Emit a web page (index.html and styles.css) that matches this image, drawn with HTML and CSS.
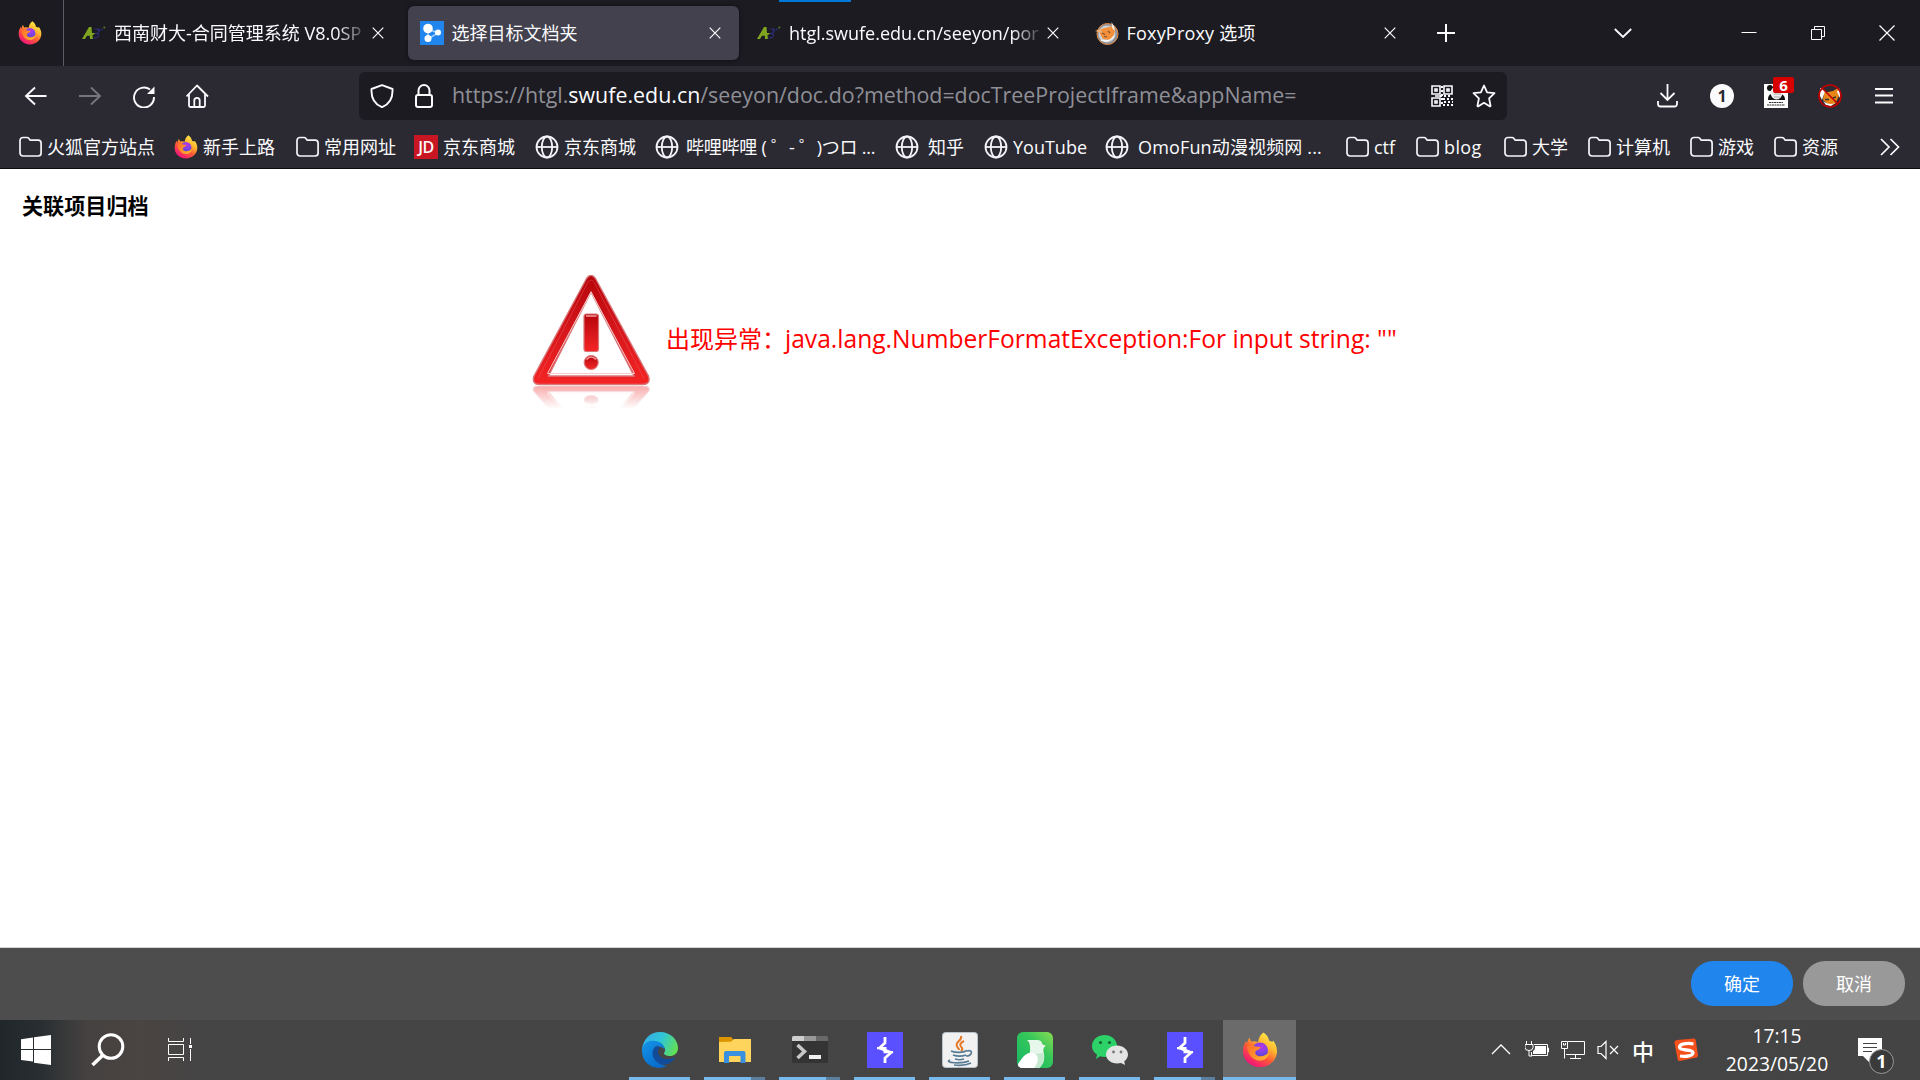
FILE: index.html
```html
<!DOCTYPE html>
<html lang="zh-CN">
<head>
<meta charset="utf-8">
<title>选择目标文档夹</title>
<link rel="stylesheet" href="styles.css">
</head>
<body>
<svg class="defs" aria-hidden="true">
  <defs>
    <linearGradient id="fx-body" x1="0.85" y1="0.05" x2="0.25" y2="0.95">
      <stop offset="0" stop-color="#fff44f"/><stop offset="0.35" stop-color="#ffb52e"/><stop offset="0.62" stop-color="#ff5a36"/><stop offset="1" stop-color="#f0147a"/>
    </linearGradient>
    <radialGradient id="fx-core" cx="0.6" cy="0.25" r="0.8">
      <stop offset="0" stop-color="#b833e1"/><stop offset="0.5" stop-color="#7a45e8"/><stop offset="1" stop-color="#4a3fae"/>
    </radialGradient>
    <linearGradient id="fx-arm" x1="0" y1="0" x2="1" y2="0.6">
      <stop offset="0" stop-color="#ff6a2b"/><stop offset="1" stop-color="#ffb02e"/>
    </linearGradient>
    <symbol id="firefox" viewBox="0 0 36 36">
      <path d="M21.500 0.500C24 2 26.500 5 27 8.500C29 9.300 30.500 11 31.200 8.500C34 12.500 35.200 16 35 20C34.500 28.500 27 35.200 18 35.200C9 35.200 1 28.500 1 19.500C1 15 2.200 11.500 4.200 8.800L4.800 11.500L7.200 5.500L9.300 9.800C11.500 9 14 9.200 16 10.200C16.500 6 18.500 2.500 21.500 .5Z" fill="url(#fx-body)"/>
      <circle cx="18" cy="18.500" r="8" fill="url(#fx-core)"/>
      <path d="M4.800 14C8 11.800 11 13 13.500 14.400L18.600 15C18 17.500 15.500 17.600 13.800 19C12.500 20.500 13.500 23.500 17 24.200C21 25 24.500 22.500 27.500 20.500C26 26 22 29 17 28.600C11 28 6 23 4.800 14Z" fill="url(#fx-arm)"/>
    </symbol>
    <symbol id="folder" viewBox="0 0 24 24">
      <path d="M2 5.500a3 3 0 0 1 3-3h4.100c.7 0 1.200.3 1.600.8l1.500 1.900h7.900a3 3 0 0 1 3 3V18a3 3 0 0 1-3 3H5a3 3 0 0 1-3-3z" fill="none" stroke="#f4f4f8" stroke-width="1.700"/>
    </symbol>
    <symbol id="globe" viewBox="0 0 24 24">
      <g fill="none" stroke="#f4f4f8" stroke-width="1.800"><circle cx="12" cy="12" r="10.500"/><ellipse cx="12" cy="12" rx="5.200" ry="10.500"/><path d="M1.500 12h21"/></g>
    </symbol>
    <symbol id="cross" viewBox="0 0 12 12"><path d="M.7.700l10.600 10.600M11.300.7L.7 11.300" stroke="#fbfbfe" stroke-width="1.200" fill="none"/></symbol>
    <symbol id="aplus" viewBox="0 0 24 24">
      <path d="M0 18L7 6l2.500 0L10 12h4l-3.500 2.200.5 3.800H8l-.2-3.200H5L3 18z" fill="#80a51f"/>
      <path d="M11 7.500h5.500c3 0 2 4-.5 4.500 2.500.8 1.200 5.500-2.500 5.500H10l3-1.500h1.500c2 0 2-2.500 0-2.700h-2l.4-1.600h2c1.800-.3 2-2.700 0-2.700z" fill="#292c70"/><circle cx="20" cy="8.500" r="1" fill="#292c70"/><circle cx="22.300" cy="6.500" r="1" fill="#557c27"/>
    </symbol>
    <symbol id="burp" viewBox="0 0 36 36">
      <path d="M0 0h36v36H0z" fill="#5b50ff"/>
      <path d="M18 5v6l-5.500 5 11.500 4.500-6 5.500v5" fill="none" stroke="#fff" stroke-width="2.800"/>
      <path d="M10 16.200h9.500M16.500 20.200h9.500" stroke="#fff" stroke-width="2.200"/>
    </symbol>
  </defs>
</svg>

<header class="browser">
  <div class="top-progress"></div>
  <div class="tabstrip">
    <div class="pinned"><svg class="i24"><use href="#firefox"/></svg></div>
    <div class="tab">
      <svg class="i24"><use href="#aplus"/></svg><span class="tab-label fade">西南财大-合同管理系统 V8.0SP</span><svg class="x12"><use href="#cross"/></svg>
    </div>
    <div class="tab active">
      <svg class="i24" viewBox="0 0 24 24"><path d="M0 0h24v24H0z" fill="#2085ed"/><path d="M8 7v11M8 8l10 4-10 6" stroke="#a5d0fa" stroke-width="1.500" fill="none"/><circle cx="8" cy="7.500" r="4.800" fill="#fff"/><circle cx="8" cy="17.500" r="3.500" fill="#fff"/><circle cx="18" cy="11.500" r="3" fill="#fff"/></svg><span class="tab-label">选择目标文档夹</span><svg class="x12"><use href="#cross"/></svg>
    </div>
    <div class="tab">
      <svg class="i24"><use href="#aplus"/></svg><span class="tab-label fade">htgl.swufe.edu.cn/seeyon/por</span><svg class="x12"><use href="#cross"/></svg>
    </div>
    <div class="tab">
      <svg class="i24" viewBox="0 0 24 24"><circle cx="12.500" cy="13" r="10.500" fill="#8c9199" stroke="#e7893c" stroke-width="1"/><circle cx="12" cy="13" r="8.500" fill="#ced1d5"/><path d="M4 9l4-1.500 8-2L19 5l1 5-2 6-4 3-6-1-3-5z" fill="#f4903a"/><path d="M0 10l6-2 1 4z" fill="#f1b27c"/><path d="M16.500 1l2.500 4 1 5-3-3z" fill="#fff" opacity=".8"/><path d="M7 12l3 1.500M13 10l2 2M9 15.500l3 .5" stroke="#7b5137" stroke-width="1.200"/><path d="M6 19c4 2 10 1 13-4" stroke="#fff" stroke-width="1.300" fill="none"/></svg><span class="tab-label foxy">FoxyProxy 选项</span><svg class="x12"><use href="#cross"/></svg>
    </div>
    <svg class="plus" viewBox="0 0 18 18"><path d="M9 0v18M0 9h18" stroke="#fbfbfe" stroke-width="2"/></svg>
    <svg class="chev" viewBox="0 0 18 10"><path d="M.8 1L9 9l8.200-8" fill="none" stroke="#fbfbfe" stroke-width="1.800"/></svg>
    <div class="window-buttons">
      <svg viewBox="0 0 16 16"><path d="M.5 7.500h15" stroke="#fff"/></svg>
      <svg viewBox="0 0 16 16"><path d="M1.500 4.500h10v10h-10zM4.500 4.500v-3h10v10h-3" fill="none" stroke="#fff"/></svg>
      <svg viewBox="0 0 16 16"><path d="M.5.500l15 15M15.500.5l-15 15" stroke="#fff" stroke-width="1.200"/></svg>
    </div>
  </div>

  <nav class="navbar">
    <div class="nav-buttons">
      <svg viewBox="0 0 24 24"><path d="M22.500 12H2M11 3.500L2 12l9 8.500" fill="none" stroke="#fbfbfe" stroke-width="1.900"/></svg>
      <svg viewBox="0 0 24 24"><path d="M1 12h21M13 3.500l9 8.500-9 8.500" fill="none" stroke="#76757d" stroke-width="1.900"/></svg>
      <svg viewBox="0 0 24 24"><path d="M18 5.500A10 10 0 1 0 22 13" fill="none" stroke="#fbfbfe" stroke-width="1.900"/><path d="M22.500 2.500v7.500H15z" fill="#fbfbfe"/></svg>
      <svg viewBox="0 0 24 24"><path d="M.5 12.500L11 1.500l11 11M3 10v11.500a1.500 1.500 0 0 0 1.500 1.500h13a1.500 1.500 0 0 0 1.500-1.500V10M8.300 22.500v-6a2.700 2.700 0 0 1 5.400 0v6" fill="none" stroke="#fbfbfe" stroke-width="1.800" stroke-linejoin="round"/></svg>
    </div>
    <div class="urlbar">
      <svg class="i24" viewBox="0 0 24 24"><path d="M12 1.200L22.500 5C23 14 20 20 12 23.200 4 20 1 14 1.500 5z" fill="none" stroke="#fbfbfe" stroke-width="1.900" stroke-linejoin="round"/></svg>
      <svg class="i24 lock" viewBox="0 0 24 24"><path d="M6.500 11V6.500a5.500 5.500 0 0 1 11 0V11" fill="none" stroke="#fbfbfe" stroke-width="2"/><rect x="4" y="11" width="16" height="12" rx="2" fill="none" stroke="#fbfbfe" stroke-width="2"/></svg>
      <span class="url">https://htgl.<b>swufe.edu.cn</b>/seeyon/doc.do?method=docTreeProjectIframe&amp;appName=</span>
      <svg class="i24" viewBox="0 0 24 24" fill="none" stroke="#fbfbfe" stroke-width="1.600"><path d="M2 2h8v8H2zM14 2h8v8h-8zM2 14h8v8H2z"/><path d="M5 5h2v2H5zM17 5h2v2h-2zM5 17h2v2H5z"/><path d="M12 2v20M10 12h12" stroke-dasharray="2 2" stroke-width="2"/><path d="M13 15h10M14 18h9M13 21h10" stroke-dasharray="2 2" stroke-width="2"/><path d="M5 12h5"/></svg>
      <svg class="i24" viewBox="0 0 24 24"><path d="M12 1.500l3.100 6.800 7.400.9-5.400 5.100 1.400 7.300a.6.600 0 0 1-.9.700L12 18.800l-5.600 3.500a.6.600 0 0 1-.9-.7l1.400-7.300L1.500 9.200l7.400-.9z" fill="none" stroke="#fbfbfe" stroke-width="1.800" stroke-linejoin="round"/></svg>
    </div>
    <div class="ext-buttons">
      <svg viewBox="0 0 24 24"><path d="M11.500 0v15.500M4.500 9l7 7 7-7M2 17v3a2.500 2.500 0 0 0 2.500 2.500h14A2.500 2.500 0 0 0 21 20v-3" fill="none" stroke="#fbfbfe" stroke-width="1.800"/></svg>
      <span class="count">1</span>
      <span class="panda"><svg viewBox="0 0 24 24"><path d="M0 0h24v24H0z" fill="#fff"/><circle cx="6" cy="4" r="3" fill="#111"/><path d="M4 16c0-5 2-6 4-6h8c2 0 5 1 5 6z" fill="#111"/><ellipse cx="12.500" cy="9" rx="6" ry="6.500" fill="#eee"/><path d="M10 10h7M10 13h6" stroke="#999" stroke-width=".8"/><path d="M5 18.500h14M3 21h18" stroke="#333" stroke-width="1" stroke-dasharray="2 .5"/></svg><em>6</em></span>
      <svg viewBox="0 0 24 24"><path d="M6 8h4l5-1 5-3 1 8-4 8-6 1-6-5z" fill="#e88517"/><path d="M2 4l5 3-3 9-2-4zM21 4l-2 4 3 6 0-6zM5 17c4 3 8 4 12 2l-4 3-5-1z" fill="#fff"/><path d="M7 15.500h4M15 14l3-1" stroke="#333" stroke-width="1.500"/><circle cx="12" cy="12" r="11" fill="none" stroke="#c00000" stroke-width="1.600"/><path d="M4 4l16 16" stroke="#c00000" stroke-width="1.600"/></svg>
      <svg viewBox="0 0 24 24"><path d="M3 5h18M3 11.500h18M3 18.500h18" stroke="#fbfbfe" stroke-width="1.800"/></svg>
    </div>
  </nav>

  <div class="bookmarks">
    <a><svg class="i24"><use href="#folder"/></svg>火狐官方站点</a>
    <a><svg class="i24"><use href="#firefox"/></svg>新手上路</a>
    <a><svg class="i24"><use href="#folder"/></svg>常用网址</a>
    <a><span class="jd">JD</span>京东商城</a>
    <a><svg class="i24"><use href="#globe"/></svg>京东商城</a>
    <a class="wide"><svg class="i24"><use href="#globe"/></svg><span class="bili">哔哩哔哩 ( ゜- ゜)つロ ...</span></a>
    <a class="wide"><svg class="i24"><use href="#globe"/></svg>知乎</a>
    <a><svg class="i24"><use href="#globe"/></svg>YouTube</a>
    <a class="wide omo"><svg class="i24"><use href="#globe"/></svg>OmoFun动漫视频网 ...</a>
    <a><svg class="i24"><use href="#folder"/></svg>ctf</a>
    <a class="blog"><svg class="i24"><use href="#folder"/></svg>blog</a>
    <a><svg class="i24"><use href="#folder"/></svg>大学</a>
    <a><svg class="i24"><use href="#folder"/></svg>计算机</a>
    <a><svg class="i24"><use href="#folder"/></svg>游戏</a>
    <a><svg class="i24"><use href="#folder"/></svg>资源</a>
    <svg class="more" viewBox="0 0 20 18"><path d="M1 1l8 8-8 8M10.500 1l8 8-8 8" fill="none" stroke="#fbfbfe" stroke-width="1.700"/></svg>
  </div>
</header>

<main class="page">
  <h1>关联项目归档</h1>
  <div class="error">
    <svg class="warning" viewBox="0 0 120 140">
      <defs>
        <linearGradient id="red" x1="0" y1="0" x2="0" y2="1"><stop offset="0" stop-color="#b50409"/><stop offset="0.500" stop-color="#d5161b"/><stop offset="1" stop-color="#f52424"/></linearGradient>
        <linearGradient id="veil" x1="0" y1="0" x2="0" y2="1"><stop offset="0" stop-color="#fff" stop-opacity=".6"/><stop offset="0.800" stop-color="#fff"/></linearGradient>
        <clipPath id="below"><path d="M0 111h120v29H0z"/></clipPath>
      </defs>
      <g id="sign">
        <path d="M55.500 3.500Q60 -3 64.500 3.500L117.500 101Q120 109 112 109.500H8Q.5 109 3 101ZM60 17L17.500 101H103Z" fill="url(#red)" fill-rule="evenodd" stroke="#d8777a" stroke-width="1.400"/>
        <path d="M60 17L16.500 98.500H103.500Z" fill="none" stroke="#f7cccc" stroke-width="1"/>
        <path d="M7 103.500L57 7Q60 3 63 7L113 103.500" fill="none" stroke="#ef6668" stroke-width="1" opacity=".4"/>
        <rect x="53" y="39" width="14.500" height="37.500" rx="2.500" fill="url(#red)" stroke="#d8777a" stroke-width="1.200"/>
        <path d="M55 41h10.500" stroke="#f2a0a0" stroke-width="1.500"/>
        <circle cx="60.200" cy="87.500" r="7" fill="url(#red)" stroke="#d8777a" stroke-width="1.200"/>
        <path d="M55.500 84.500q4.700-5 9.400 0" stroke="#f49a9a" fill="none" stroke-width="1.500"/>
      </g>
      <g clip-path="url(#below)"><use href="#sign" transform="translate(0 180) scale(1 -.63)"/><path d="M0 110h120v30H0z" fill="url(#veil)"/></g>
    </svg>
    <p>出现异常：<span>java.lang.NumberFormatException:For input string: ""</span></p>
  </div>
</main>

<footer class="actions">
  <button class="ok">确定</button>
  <button class="cancel">取消</button>
</footer>

<div class="taskbar">
  <div class="start">
    <svg class="win" viewBox="0 0 30 30"><path d="M0 4.200L12 2.500V14H0zM13 2.300L30 0v14H13zM0 15h12v11.500L0 25zM13 15h17v15l-17-2.300z" fill="#fff"/></svg>
    <svg class="find" viewBox="0 0 34 34"><circle cx="20" cy="13.500" r="11.800" fill="none" stroke="#fff" stroke-width="3"/><path d="M11.500 22.500L1.500 32" stroke="#fff" stroke-width="3.600"/></svg>
    <svg class="view" viewBox="0 0 24 24"><path d="M.5 0v3.500h15V0M.5 6.500h15v10H.5zM.5 23v-3.500h15V23M22.500 0v6M22.500 11v12" fill="none" stroke="#fff"/><path d="M21 7h3v3h-3z" fill="#fff"/></svg>
  </div>
  <div class="apps">
    <div class="app"><svg viewBox="0 0 36 36"><defs><linearGradient id="edge-a" x1="0" y1="0.300" x2="1" y2="0.600"><stop offset="0" stop-color="#35aee8"/><stop offset="0.500" stop-color="#30c5d5"/><stop offset="1" stop-color="#64e052"/></linearGradient><linearGradient id="edge-b" x1="0" y1="0" x2="0.700" y2="1"><stop offset="0" stop-color="#1495e8"/><stop offset="1" stop-color="#0869c9"/></linearGradient></defs><path d="M0 18C1 7 8 0 18 0c11 0 18 8 18 16 0 6-5 8.500-9 8-4-.5-6-2-4.500-4 1.500-2 .5-6-4.500-8z" fill="url(#edge-a)"/><path d="M0 17C2 10 8 8 13 9c7 1 9.500 5 9.500 8.500C17 12 12 15 12 21c0 7 6 12 13 13-13 6-26-3-25-17z" fill="url(#edge-b)"/><path d="M14 14c-6 5-4 14 4 18 8 2 13-2 15-7-7 4-16 2-17-5-.2-2 1-4 2-5z" fill="#124c98"/></svg><i></i></div>
    <div class="app multi"><svg viewBox="0 0 36 36"><path d="M2 5h12l2 2v8H2z" fill="#dc9500"/><path d="M2 10l12-.2L17 7h17v23H2z" fill="#ffd45d"/><path d="M7 31V21q0-2 2-2h17.500q2 0 2 2v10h-5v-7H12v7z" fill="#3990de"/></svg><i></i></div>
    <div class="app multi"><svg viewBox="0 0 36 36"><path d="M0 9h36v20.500q0 1.500-1.500 1.500h-33Q0 31 0 29.500z" fill="#343434"/><path d="M0 9V5.500Q0 4 1.500 4H12v5z" fill="#cecece"/><path d="M12 4h12v5H12z" fill="#989898"/><path d="M24 4h10.500Q36 4 36 5.500V9H24z" fill="#686868"/><path d="M5.500 13l7 6.500-7 6.500" fill="none" stroke="#c8c8c8" stroke-width="3.500"/><path d="M17 23h12v4H17z" fill="#f1f1f1"/></svg><i></i></div>
    <div class="app"><svg><use href="#burp"/></svg><i></i></div>
    <div class="app"><svg viewBox="0 0 36 36"><rect x=".5" y=".5" width="35" height="35" rx="3" fill="#f1f1f2" stroke="#b8c2ca"/><path d="M19 4c2 5-8 6-3 12 1 1 1 2 1 2M22 9c-4 2-5 4-2 7 1 1 0 2-1 3" fill="none" stroke="#e77824" stroke-width="2"/><path d="M9 19c5 2 12 2 16-.5M11 23c4 1.500 9 1.500 13 0M13 27c3 1 6 1 9 0M25 19c7-2 5 5-1 5M8 28c-7 3 12 4 19 1M12 33c7 .8 13 0 17-2" fill="none" stroke="#587b94" stroke-width="1.700"/></svg><i></i></div>
    <div class="app"><svg viewBox="0 0 36 36"><defs><linearGradient id="gr" x1="0" y1="1" x2="1" y2="0"><stop offset="0" stop-color="#16b863"/><stop offset="0.600" stop-color="#35c65b"/><stop offset="1" stop-color="#89dc53"/></linearGradient></defs><rect width="36" height="36" rx="6" fill="url(#gr)"/><path d="M10 8h9c5 0 6 2 6 4l4 2c-3 1-3 4-2 8 1 6-1 11-5 14H5q-4-1-4-3c2-4 11-8 12-13 .5-5 0-10-3-12z" fill="#e8f7ec"/><path d="M18 22c5 3 3 10-1 14h5c5-4 6-10 4-15z" fill="#c4e9cf"/><path d="M1 32c5-8 10-14 17-10 5 3 2 10-1 14H5q-4-1-4-4z" fill="#fff"/></svg><i></i></div>
    <div class="app"><svg viewBox="0 0 36 36"><path d="M0 14C0 7.500 6 3 12.500 3S25 7.500 25 14s-6 11-12.500 11c-1.500 0-3-.2-4.500-.7L4 27l1-4.500C2 20.500 0 18 0 14z" fill="#2cd168"/><circle cx="8.500" cy="10.500" r="1.600" fill="#176337"/><circle cx="17.500" cy="10.500" r="1.600" fill="#176337"/><path d="M14 22.500c0-5 5-9 11-9s11 4 11 9c0 3-1.500 5-3.700 6.800l.7 3.700-4-2c-8 2-15-2.500-15-8.500z" fill="#e4e4e4"/><circle cx="21.500" cy="20" r="1.400" fill="#777"/><circle cx="29" cy="20" r="1.400" fill="#777"/></svg><i></i></div>
    <div class="app multi"><svg><use href="#burp"/></svg><i></i></div>
    <div class="app current"><svg><use href="#firefox"/></svg><i></i></div>
  </div>
  <div class="tray">
    <svg viewBox="0 0 24 24"><path d="M3 16l9-9 9 9" fill="none" stroke="#fff" stroke-width="1.300"/></svg>
    <svg viewBox="0 0 24 24"><path d="M1.500 3v4M6.500 3v4" stroke="#fff"/><path d="M0 6.500h8v3q0 3-4 3t-4-3zM4 12v6h3" fill="none" stroke="#fff"/><path d="M9 6.500h13.500v11H6.500V14M22.500 10h1v4h-1" fill="none" stroke="#fff"/><path d="M10 8h11v8H8v-3q2-1 2-3z" fill="#fff"/></svg>
    <svg viewBox="0 0 24 24"><path d="M7 3.500h16.500v13H5M.5 3.500h6v7h-6zM3.500 10.500v10M14.500 16.500v4M9 20.500h11M2.500 5v2h2V5" fill="none" stroke="#fff"/></svg>
    <svg viewBox="0 0 24 24"><path d="M1 8.500h3l5-5v17l-5-5H1zM13 8l8 8M21 8l-8 8" fill="none" stroke="#fff" stroke-width="1.200"/></svg>
    <span class="ime">中</span>
    <svg viewBox="0 0 24 24"><path d="M3 2L20 .5q1.500 0 1.700 1.500L24 17q0 2-1.500 2.500L6 23q-2 .3-2.300-1.500L.5 5Q.2 2.500 3 2z" fill="#f3501b"/><path d="M19.500 6C13 4.500 5 6 5.500 9.500c.5 3.500 13 1.500 13.500 5 .3 3.500-7.500 4.500-13 3.500" fill="none" stroke="#fff" stroke-width="3.300"/></svg>
  </div>
  <div class="clock"><span>17:15</span><span>2023/05/20</span></div>
  <div class="notice"><svg viewBox="0 0 24 24"><path d="M0 0h24v18H14l-3 6-6-6H0z" fill="#fff"/><path d="M5 5.500h14M5 9.500h14M5 13.500h9" stroke="#444"/></svg><b>1</b></div>
</div>
</body>
</html>
```
FILE: styles.css
```css
* { box-sizing: border-box; }
body { margin: 0; width: 1920px; height: 1080px; overflow: hidden; display: flex; flex-direction: column; background: #fff; font-family: "Open Sans", "Noto Sans CJK SC", sans-serif; font-size: 18px; }
svg { display: block; flex: none; }
.defs { position: absolute; width: 0; height: 0; }
.i24 { width: 24px; height: 24px; }
.x12 { width: 12px; height: 12px; }

.browser { position: relative; height: 169px; flex: none; background: #2b2a33; color: #fbfbfe; border-bottom: 1px solid #0c0c0d; }
.top-progress { position: absolute; left: 779px; top: 0; width: 72px; height: 2px; background: #0078d7; }
.tabstrip { height: 66px; display: flex; align-items: center; background: #1c1b22; }
.pinned { width: 64px; height: 66px; padding-left: 18px; margin-right: 6px; display: flex; align-items: center; border-right: 1px solid #5b5a63; }
.tab { width: 331px; height: 54px; margin-right: 6.5px; padding: 0 17.5px 0 12px; display: flex; align-items: center; gap: 8px; border-radius: 6px; }
.tab.active { background: #42414d; box-shadow: 0 0 4px rgba(0, 0, 0, .5); }
.tab-label { flex: 1; min-width: 0; white-space: nowrap; line-height: 30px; }
.fade { margin-right: -6px; -webkit-mask-image: linear-gradient(90deg, #000 87%, transparent); mask-image: linear-gradient(90deg, #000 87%, transparent); }
.foxy { letter-spacing: .2px; }
.plus { width: 18px; height: 18px; margin-left: 17px; }
.chev { width: 18px; height: 10px; margin-left: 159px; }
.window-buttons { display: flex; gap: 53px; margin-left: 109px; }
.window-buttons svg { width: 16px; height: 16px; }

.navbar { height: 60px; display: flex; align-items: center; }
.nav-buttons { width: 359px; padding-left: 24px; display: flex; gap: 30px; }
.nav-buttons svg { width: 24px; height: 24px; }
.urlbar { width: 1148px; height: 48px; padding: 0 11px; display: flex; align-items: center; background: #1c1b22; border-radius: 6px; }
.lock { margin-left: 18px; }
.url { width: 978px; margin-left: 16px; font-size: 21.400px; line-height: 28px; padding-bottom: 2px; color: #8f8f96; white-space: nowrap; }
.urlbar .url + svg { margin-right: 18px; }
.url b { font-weight: 400; color: #fbfbfe; }
.ext-buttons { display: flex; gap: 30px; margin-left: 149px; }
.ext-buttons svg { width: 24px; height: 24px; }
.count { width: 24px; height: 24px; border-radius: 50%; background: #fbfbfe; color: #2b2a33; font: bold 16px/24px "Open Sans", sans-serif; text-align: center; }
.panda { position: relative; }
.panda em { position: absolute; left: 9px; top: -7px; width: 21px; height: 16px; border-radius: 2px; background: #d70000; font: bold 15px/16px "Open Sans", sans-serif; text-align: center; }

.bookmarks { height: 42px; padding-left: 18px; display: grid; grid-template-columns: 156px 121px 119px 121px 120px 240px 89px 121px 240px 70px 88px 84px 102px 84px 107px 20px; align-items: center; }
.bookmarks a { display: flex; align-items: center; gap: 5px; white-space: nowrap; line-height: 30px; }
.bookmarks .wide { gap: 9px; }
.bili { margin-left: -2px; letter-spacing: -.22px; }
.omo { letter-spacing: .15px; }
.blog { letter-spacing: .4px; }
.jd { width: 24px; height: 24px; background: #c91623; font: 600 16px/24px "Open Sans", sans-serif; text-align: center; letter-spacing: -.5px; }
.more { width: 20px; height: 18px; }

.page { height: 779px; flex: none; border-bottom: 1px solid #d4d4d4; }
.page h1 { margin: 0; padding: 21px 0 0 22px; font-size: 21.100px; line-height: 31px; color: #000; }
.error { display: flex; align-items: center; gap: 15px; padding: 54px 0 0 531px; color: red; }
.error p { margin: 0 0 15px; font-size: 24px; white-space: nowrap; }
.error p span { margin-left: -1px; font-size: 24.600px; }
.warning { width: 120px; height: 140px; }

.actions { height: 72px; flex: none; display: flex; justify-content: flex-end; gap: 10px; padding: 13px 15px; background: #4d4d4d; }
.actions button { width: 102px; height: 45px; border: 0; padding: 0 0 2px; border-radius: 22px; color: #fff; font: 18px "Noto Sans CJK SC", sans-serif; }
.actions .ok { background: #2085ed; }
.actions .cancel { background: #999; }

.taskbar { height: 60px; flex: none; display: flex; color: #fff; background: linear-gradient(90deg, #20272b 0, #282e31 40px, #444140 85px, #4a4442 140px, #454545 200px, #444 100%); }
.start { width: 623px; padding: 15px 0 0 21px; display: flex; align-items: flex-start; }
.win { width: 30px; height: 30px; }
.find { width: 34px; height: 34px; margin: -2px 0 0 40px; }
.view { width: 24px; height: 24px; margin: 3px 0 0 43px; }
.apps { width: 867px; display: flex; gap: 2px; }
.app { width: 73px; height: 60px; padding-top: 12px; display: flex; flex-direction: column; align-items: center; justify-content: space-between; }
.app svg { width: 36px; height: 36px; }
.app i { width: 61px; height: 3px; background: #76b9ed; }
.app.multi i { background: linear-gradient(90deg, #76b9ed 47px, #5c7f9e 47px); }
.app.current { background: #6b6b6b; }
.app.current i { width: 73px; }
.tray { width: 220px; display: flex; align-items: center; gap: 12px; margin-left: -1px; }
.tray svg { width: 24px; height: 24px; }
.ime { width: 24px; margin: 0 7px 0 -2px; font: 500 22px/58px "Noto Sans CJK SC", sans-serif; text-align: center; }
.clock { width: 136px; padding-top: 2px; display: flex; flex-direction: column; text-align: center; line-height: 28px; font-size: 19.300px; }
.notice { position: relative; width: 24px; height: 24px; margin: 18px 0 0 13px; }
.notice svg { width: 24px; height: 24px; }
.notice b { position: absolute; left: 11px; top: 11px; width: 25px; height: 25px; border: 1px solid #999; border-radius: 50%; background: #3a3a3a; font-size: 18px; line-height: 22px; text-align: center; }
```
